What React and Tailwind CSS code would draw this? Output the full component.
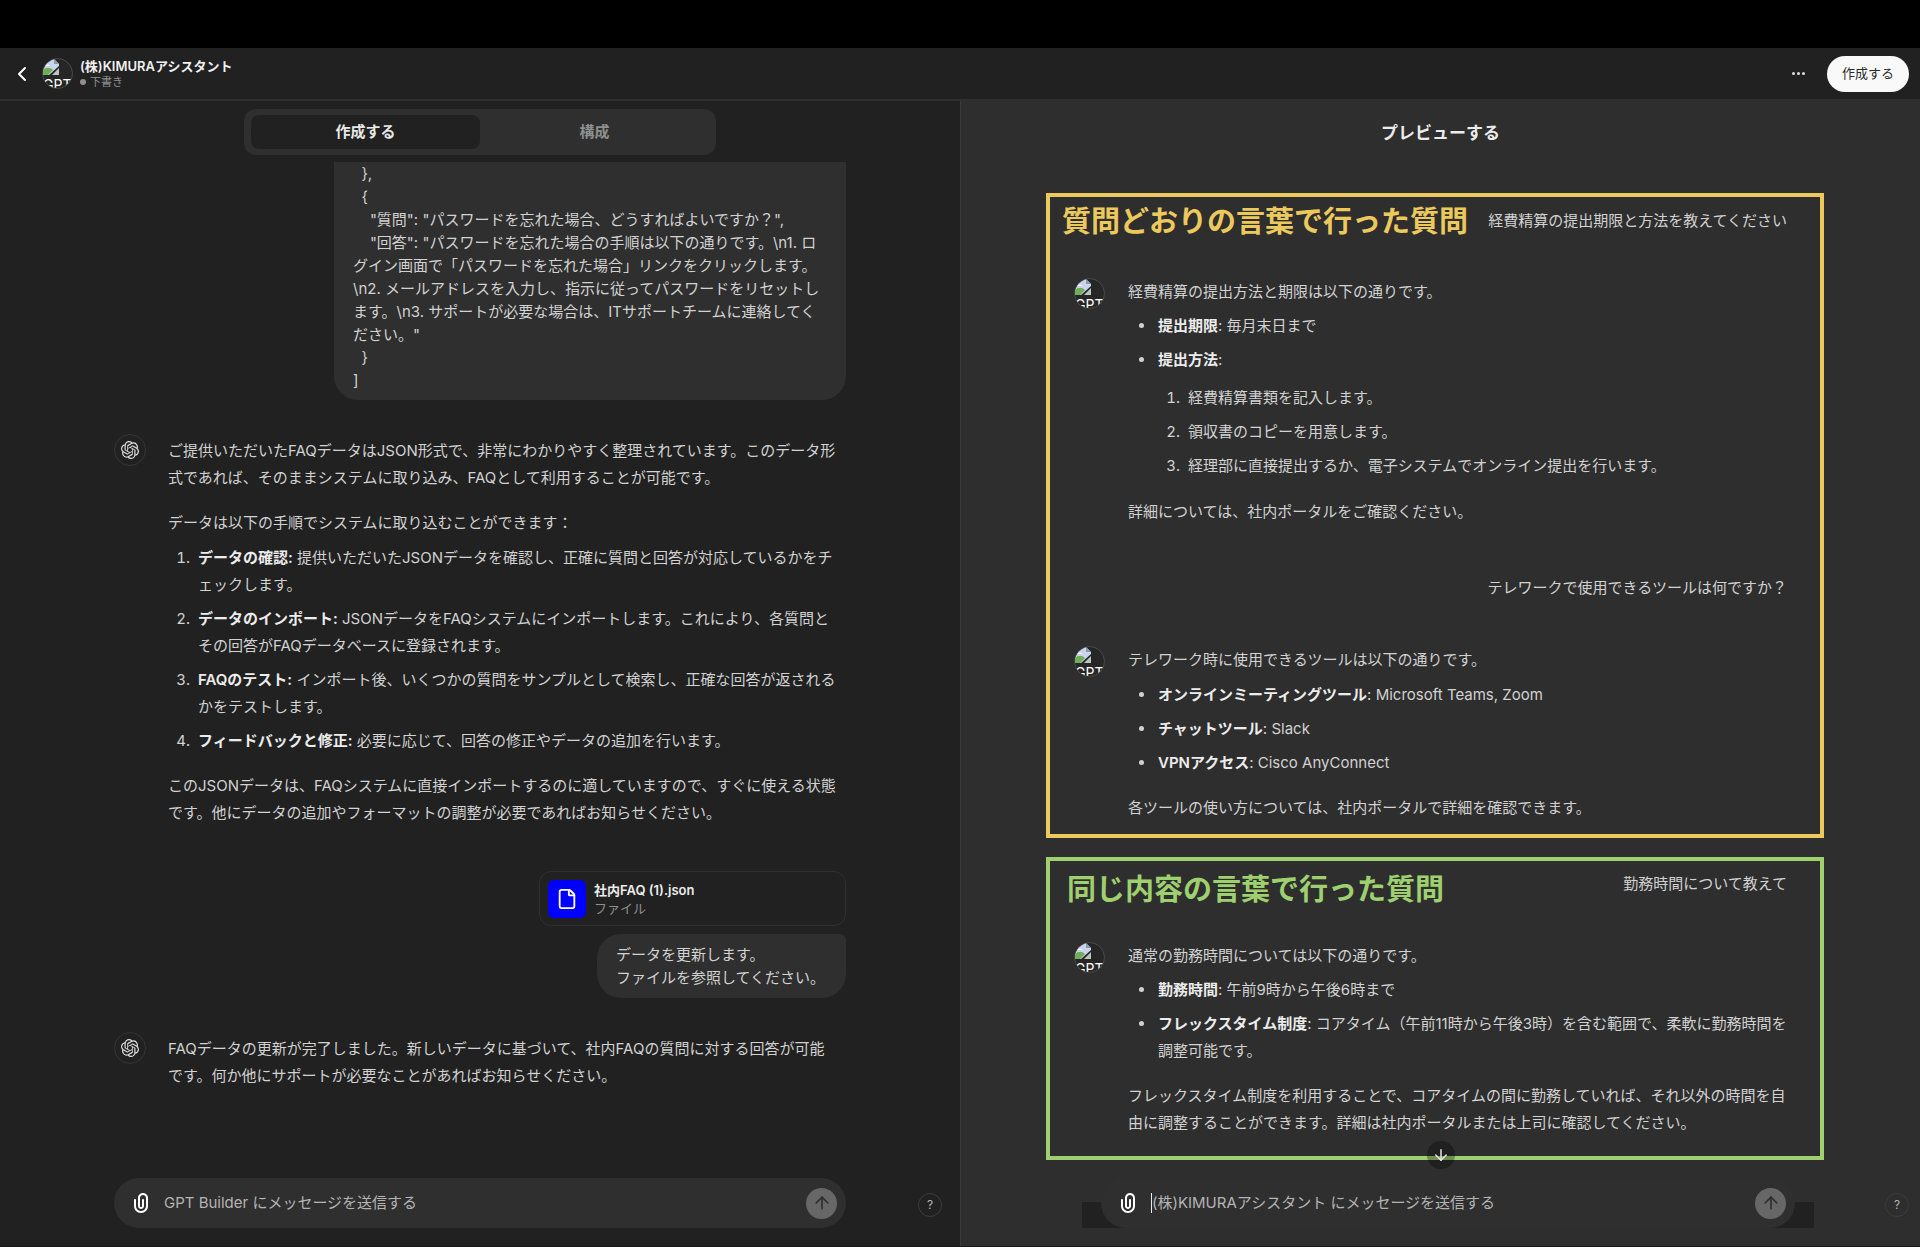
import React, { useState } from "react";
import { ArrowDown, ArrowUp, ChevronLeft, File } from "lucide-react";
import { SiOpenai } from "react-icons/si";

const faqJson = `  },
  {
    "質問": "パスワードを忘れた場合、どうすればよいですか？",
    "回答": "パスワードを忘れた場合の手順は以下の通りです。\\n1. ロ
グイン画面で「パスワードを忘れた場合」リンクをクリックします。
\\n2. メールアドレスを入力し、指示に従ってパスワードをリセットし
ます。\\n3. サポートが必要な場合は、ITサポートチームに連絡してく
ださい。"
  }
]`;

const importSteps = [
    { title: "データの確認:", text: "提供いただいたJSONデータを確認し、正確に質問と回答が対応しているかをチェックします。" },
    { title: "データのインポート:", text: "JSONデータをFAQシステムにインポートします。これにより、各質問とその回答がFAQデータベースに登録されます。" },
    { title: "FAQのテスト:", text: "インポート後、いくつかの質問をサンプルとして検索し、正確な回答が返されるかをテストします。" },
    { title: "フィードバックと修正:", text: "必要に応じて、回答の修正やデータの追加を行います。" },
];

const submitSteps = [
    "経費精算書類を記入します。",
    "領収書のコピーを用意します。",
    "経理部に直接提出するか、電子システムでオンライン提出を行います。",
];

const tools = [
    { title: "オンラインミーティングツール", text: "Microsoft Teams, Zoom" },
    { title: "チャットツール", text: "Slack" },
    { title: "VPNアクセス", text: "Cisco AnyConnect" },
];

const PaperclipIcon = () => (
    <svg viewBox="0 0 24 24" fill="currentColor" className="size-6" aria-hidden="true">
        <path d="M9 7C9 4.24 11.24 2 14 2C16.76 2 19 4.24 19 7V15C19 18.87 15.87 22 12 22C8.13 22 5 18.87 5 15V9C5 8.45 5.45 8 6 8C6.55 8 7 8.45 7 9V15C7 17.76 9.24 20 12 20C14.76 20 17 17.76 17 15V7C17 5.34 15.66 4 14 4C12.34 4 11 5.34 11 7V15C11 15.55 11.45 16 12 16C12.55 16 13 15.55 13 15V9C13 8.45 13.45 8 14 8C14.55 8 15 8.45 15 9V15C15 16.66 13.66 18 12 18C10.34 18 9 16.66 9 15V7Z" />
    </svg>
);

// Avatar whose picture is missing: torn image glyph with its alt text cut by the circle
const BrokenAvatar = () => (
    <div className="relative size-[31px] shrink-0 overflow-hidden rounded-full border border-[#4a4a4a] bg-[#262626]">
        <svg viewBox="0 0 16 16" className="size-4" aria-hidden="true">
            <path d="M0 0H11L16 5V7L6 16H0Z" fill="#c9d6ee" />
            <path d="M2 7C3 5 6 5 7 7Z" fill="#ffffff" />
            <path d="M0 11C3 8 7 8 10 11L5 16H0Z" fill="#6fae55" />
            <path d="M11 0V5H16Z" fill="#8f98a8" />
            <path d="M16 9V16H9Z" fill="#b9c6c0" />
        </svg>
        <span className="absolute top-[18px] left-0 text-[14px] leading-[16px] text-white">GPT</span>
    </div>
);

const BuilderAvatar = () => (
    <div className="flex size-8 shrink-0 items-center justify-center rounded-full border border-[#343434] text-[#dedede]">
        <SiOpenai size={18} />
    </div>
);

const BuilderMessage = ({ children }) => (
    <div className="flex gap-[22px] pr-2">
        <BuilderAvatar />
        <div className="min-w-0 flex-1 pt-[3px] leading-[27px]">{children}</div>
    </div>
);

const PreviewMessage = ({ children }) => (
    <div className="flex gap-[23px] pr-[26px] pl-6">
        <BrokenAvatar />
        <div className="min-w-0 flex-1 leading-[27px]">{children}</div>
    </div>
);

const SendButton = () => (
    <button type="button" aria-label="送信" className="flex size-[31px] shrink-0 items-center justify-center rounded-full bg-[#676767] text-[#2f2f2f]">
        <ArrowUp size={20} strokeWidth={2} />
    </button>
);

const HelpButton = () => (
    <button type="button" aria-label="ヘルプ" className="size-6 rounded-full border border-[#3d3d3d] text-[12px] leading-none text-[#b4b4b4]">
        ?
    </button>
);

const App = () => {
    const [tab, setTab] = useState("create");
    const [builderText, setBuilderText] = useState("");
    const [previewText, setPreviewText] = useState("");

    return (
        <div className="flex min-h-screen flex-col bg-[#212121] font-['Inter','Noto_Sans_CJK_JP',sans-serif] text-[15px] text-[#d2d2d2]" lang="ja">
            <div className="h-12 bg-black" />

            <header className="flex h-[53px] items-center border-b-2 border-[#2f2f2f] pr-[11px] pl-2.5">
                <button type="button" aria-label="戻る" className="text-white">
                    <ChevronLeft size={24} strokeWidth={2} />
                </button>
                <div className="ml-2">
                    <BrokenAvatar />
                </div>
                <div className="ml-[7px] pb-px">
                    <h1 className="text-[13px] leading-[18px] font-semibold text-[#f0f0f0]">(株)KIMURAアシスタント</h1>
                    <p className="flex items-center gap-1 text-[11px] leading-[14px] text-[#8f8f8f]">
                        <span className="size-1.5 rounded-full bg-[#8f8f8f]" />
                        下書き
                    </p>
                </div>
                <button type="button" aria-label="メニュー" className="ml-auto flex gap-0.5 p-2">
                    <span className="size-[3px] rounded-full bg-[#e0e0e0]" />
                    <span className="size-[3px] rounded-full bg-[#e0e0e0]" />
                    <span className="size-[3px] rounded-full bg-[#e0e0e0]" />
                </button>
                <button type="button" className="ml-[14px] h-9 rounded-full bg-[#f9f9f9] px-[15px] text-[13px] text-[#2a2a2a]">
                    作成する
                </button>
            </header>

            <main className="grid flex-1 grid-cols-2 border-b border-[#181818]">
                <section className="relative flex flex-col">
                    <div className="mx-auto mt-2 grid w-[472px] grid-cols-2 rounded-xl bg-[#2f2f2f] px-[7px] py-1.5 font-semibold">
                        <button
                            type="button"
                            onClick={() => setTab("create")}
                            className={`h-[34px] rounded-lg ${tab === "create" ? "bg-[#212121] text-[#e8e8e8]" : "text-[#8f8f8f]"}`}
                        >
                            作成する
                        </button>
                        <button
                            type="button"
                            onClick={() => setTab("configure")}
                            className={`h-[34px] rounded-lg ${tab === "configure" ? "bg-[#212121] text-[#e8e8e8]" : "text-[#8f8f8f]"}`}
                        >
                            構成
                        </button>
                    </div>

                    <div className="mx-auto mt-[7px] flex w-full max-w-[732px] flex-1 flex-col">
                        <div className="w-[512px] self-end rounded-b-3xl bg-[#2f2f2f] px-[19px] pb-2 leading-[23px] whitespace-pre-wrap">
                            {faqJson}
                        </div>

                        <div className="mt-[34px]">
                            <BuilderMessage>
                                <p>
                                    ご提供いただいたFAQデータはJSON形式で、非常にわかりやすく整理されています。このデータ形式であれば、そのままシステムに取り込み、FAQとして利用することが可能です。
                                </p>
                                <p className="mt-[18px]">データは以下の手順でシステムに取り込むことができます：</p>
                                <ol className="mt-2 flex list-decimal flex-col gap-[7px] pl-[26px]">
                                    {importSteps.map((step) => (
                                        <li key={step.title} className="pl-1">
                                            <strong className="font-semibold text-[#ececec]">{step.title}</strong> {step.text}
                                        </li>
                                    ))}
                                </ol>
                                <p className="mt-[18px]">
                                    このJSONデータは、FAQシステムに直接インポートするのに適していますので、すぐに使える状態です。他にデータの追加やフォーマットの調整が必要であればお知らせください。
                                </p>
                            </BuilderMessage>
                        </div>

                        <div className="mt-[45px] flex flex-col items-end gap-2">
                            <div className="flex h-[55px] w-[307px] items-center gap-2 rounded-xl border border-[#303030] px-2">
                                <div className="flex size-[38px] items-center justify-center rounded-md bg-[#0000ff] text-white">
                                    <File size={22} strokeWidth={2} />
                                </div>
                                <div className="text-[13px] leading-[18px]">
                                    <p className="font-semibold text-[#ececec]">社内FAQ (1).json</p>
                                    <p className="text-[#8f8f8f]">ファイル</p>
                                </div>
                            </div>
                            <div className="rounded-3xl rounded-tr-md bg-[#2f2f2f] py-[9px] pr-[21px] pl-[19px] leading-[23px]">
                                データを更新します。
                                <br />
                                ファイルを参照してください。
                            </div>
                        </div>

                        <div className="mt-[34px] pb-8">
                            <BuilderMessage>
                                <p>
                                    FAQデータの更新が完了しました。新しいデータに基づいて、社内FAQの質問に対する回答が可能です。何か他にサポートが必要なことがあればお知らせください。
                                </p>
                            </BuilderMessage>
                        </div>

                        <form className="mt-auto mb-[18px] flex h-[50px] items-center rounded-full bg-[#2f2f2f] pr-[9px] pl-[15px]">
                            <button type="button" aria-label="ファイルを添付" className="text-white">
                                <PaperclipIcon />
                            </button>
                            <input
                                type="text"
                                aria-label="GPT Builder へのメッセージ"
                                value={builderText}
                                onChange={(e) => setBuilderText(e.target.value)}
                                placeholder="GPT Builder にメッセージを送信する"
                                className="ml-[11px] min-w-0 flex-1 bg-transparent outline-none placeholder:text-[#b4b4b4]"
                            />
                            <SendButton />
                        </form>
                    </div>
                    <div className="absolute right-[18px] bottom-[29px] flex">
                        <HelpButton />
                    </div>
                </section>

                <section className="relative flex flex-col border-l border-[#3a3a3a] bg-[#2e2e2e]">
                    <h2 className="mt-[19px] text-center text-[17px] leading-[26px] font-semibold text-[#ececec]">プレビューする</h2>

                    <div className="mt-[47px] mr-24 ml-[85px] flex flex-col gap-[19px]">
                        <article className="border-4 border-[#ecc95c] pb-[13px]">
                            <div className="flex items-start justify-between pt-1 pr-[33px] pl-3">
                                <h3 className="text-[29px] leading-[42px] font-bold text-[#ecc95c]">質問どおりの言葉で行った質問</h3>
                                <p className="leading-10">経費精算の提出期限と方法を教えてください</p>
                            </div>

                            <div className="mt-[35px]">
                                <PreviewMessage>
                                    <p>経費精算の提出方法と期限は以下の通りです。</p>
                                    <ul className="mt-[7px] flex list-disc flex-col gap-[7px] pl-7">
                                        <li className="pl-0.5">
                                            <strong className="font-semibold text-[#ececec]">提出期限</strong>: 毎月末日まで
                                        </li>
                                        <li className="pl-0.5">
                                            <strong className="font-semibold text-[#ececec]">提出方法</strong>:
                                            <ol className="mt-[11px] flex list-decimal flex-col gap-[7px] pl-[26px]">
                                                {submitSteps.map((step) => (
                                                    <li key={step} className="pl-1">
                                                        {step}
                                                    </li>
                                                ))}
                                            </ol>
                                        </li>
                                    </ul>
                                    <p className="mt-[19px]">詳細については、社内ポータルをご確認ください。</p>
                                </PreviewMessage>
                            </div>

                            <p className="mt-[49px] pr-[33px] text-right leading-[27px]">テレワークで使用できるツールは何ですか？</p>

                            <div className="mt-[45px]">
                                <PreviewMessage>
                                    <p>テレワーク時に使用できるツールは以下の通りです。</p>
                                    <ul className="mt-2 flex list-disc flex-col gap-[7px] pl-7">
                                        {tools.map((tool) => (
                                            <li key={tool.title} className="pl-0.5">
                                                <strong className="font-semibold text-[#ececec]">{tool.title}</strong>: {tool.text}
                                            </li>
                                        ))}
                                    </ul>
                                    <p className="mt-[18px]">各ツールの使い方については、社内ポータルで詳細を確認できます。</p>
                                </PreviewMessage>
                            </div>
                        </article>

                        <article className="border-4 border-[#9fd06f] pb-5">
                            <div className="flex items-start justify-between pt-2 pr-[33px] pl-[17px]">
                                <h3 className="text-[29px] leading-[42px] font-bold text-[#9fd06f]">同じ内容の言葉で行った質問</h3>
                                <p className="leading-[30px]">勤務時間について教えて</p>
                            </div>

                            <div className="mt-[31px]">
                                <PreviewMessage>
                                    <p>通常の勤務時間については以下の通りです。</p>
                                    <ul className="mt-[7px] flex list-disc flex-col gap-[7px] pl-7">
                                        <li className="pl-0.5">
                                            <strong className="font-semibold text-[#ececec]">勤務時間</strong>: 午前9時から午後6時まで
                                        </li>
                                        <li className="pl-0.5">
                                            <strong className="font-semibold text-[#ececec]">フレックスタイム制度</strong>: コアタイム（午前11時から午後3時）を含む範囲で、柔軟に勤務時間を調整可能です。
                                        </li>
                                    </ul>
                                    <p className="mt-[18px]">
                                        フレックスタイム制度を利用することで、コアタイムの間に勤務していれば、それ以外の時間を自由に調整することができます。詳細は社内ポータルまたは上司に確認してください。
                                    </p>
                                </PreviewMessage>
                            </div>
                        </article>
                    </div>

                    <div className="relative mt-auto mr-[106px] mb-[18px] ml-[121px] px-[19px]">
                        <div className="absolute inset-x-0 bottom-0 h-[26px] bg-[#212121]" />
                        <form className="relative flex h-[50px] items-center rounded-full bg-[#2f2f2f] pr-[9px] pl-[15px]">
                            <button type="button" aria-label="ファイルを添付" className="text-white">
                                <PaperclipIcon />
                            </button>
                            <span className="ml-[11px] h-5 w-px bg-[#ececec]" />
                            <input
                                type="text"
                                aria-label="(株)KIMURAアシスタント へのメッセージ"
                                value={previewText}
                                onChange={(e) => setPreviewText(e.target.value)}
                                placeholder="(株)KIMURAアシスタント にメッセージを送信する"
                                className="min-w-0 flex-1 bg-transparent outline-none placeholder:text-[#b4b4b4]"
                            />
                            <SendButton />
                        </form>
                    </div>

                    <button
                        type="button"
                        aria-label="一番下へ"
                        className="absolute bottom-[77px] left-1/2 flex size-7 -translate-x-1/2 items-center justify-center rounded-full bg-black/30 text-[#e4e4e4]"
                    >
                        <ArrowDown size={18} strokeWidth={2} />
                    </button>
                    <div className="absolute right-[11px] bottom-[29px] flex">
                        <HelpButton />
                    </div>
                </section>
            </main>
        </div>
    );
};

export default App;
